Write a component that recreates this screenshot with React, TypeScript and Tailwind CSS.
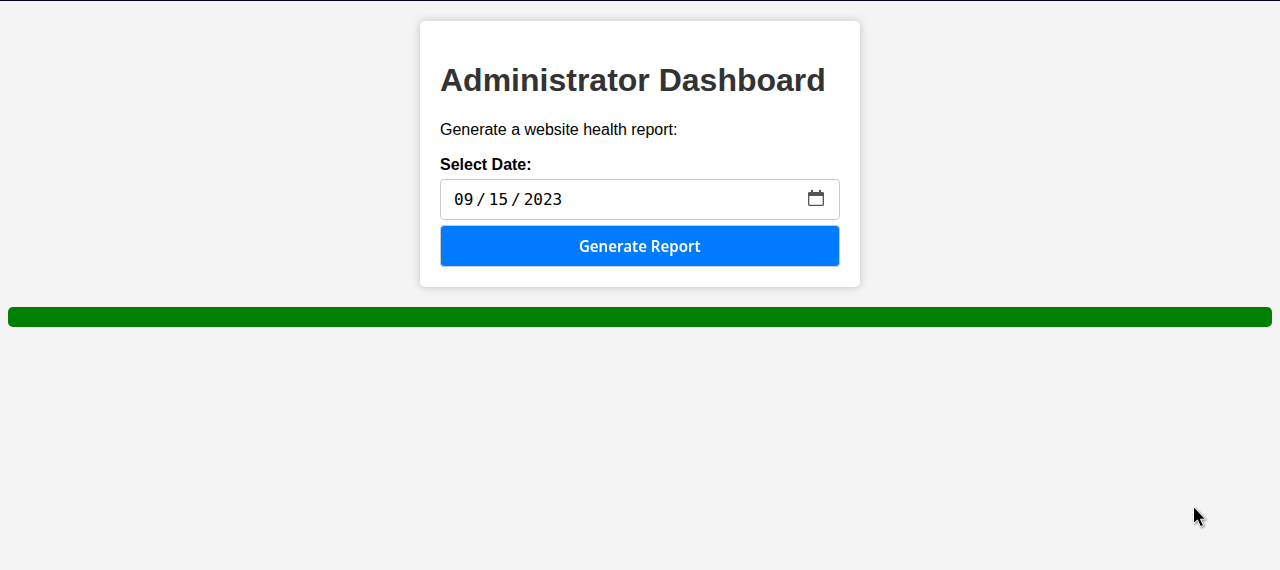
import React from 'react';

export default function App() {
  return (
    <div className="relative min-h-[570px] border-t border-[#0c0413] bg-[#f4f4f4] px-2 pt-5 font-['Liberation_Sans',Arial,sans-serif] text-base leading-[18px] text-black">
      <main className="mx-auto h-[266px] w-[440px] rounded-[5px] bg-white px-5 pt-[41px] shadow-[0_0_10px_rgba(0,0,0,0.2)]">
        <h1 className="text-[32px] font-bold leading-[37px] text-[#333]">Administrator Dashboard</h1>
        <p className="mt-[22px]">Generate a website health report:</p>
        <div className="mt-[17px] font-bold">Select Date:</div>
        <div className="mt-[5px] flex h-[41px] items-center justify-between rounded-[4px] border border-[#ccc] pl-[13px] pr-[15px]">
          <div className="flex font-['DejaVu_Sans_Mono',monospace] text-[16px]">
            <span>09</span><span className="w-[15.6px] text-center">/</span><span>15</span><span className="w-[15.6px] text-center">/</span><span>2023</span>
          </div>
          <svg className="mb-[3px]" width="16" height="16" viewBox="0 0 16 16" fill="none" stroke="#555">
            <rect x=".65" y="2.65" width="14.7" height="12.7" rx="1.2" strokeWidth="1.3" />
            <path d="M1.5 2h13a1.5 1.5 0 0 1 1.5 1.5V6H0V3.5A1.5 1.5 0 0 1 1.5 2z" fill="#555" stroke="none" />
            <path d="M4 0v3M12 0v3" strokeWidth="2" />
          </svg>
        </div>
        <button className="mt-[5px] block h-[42px] w-full rounded-[4px] border border-[#ccc] bg-[#007bff] font-['Noto_Sans',sans-serif] text-base font-semibold text-white">
          <span className="inline-block scale-x-[0.94]">Generate Report</span>
        </button>
      </main>
      <div className="mt-5 h-5 rounded-[5px] bg-[green]" />
      <svg className="absolute left-[1192px] top-[504px] drop-shadow-[1px_1px_1px_rgba(0,0,0,0.45)]" width="16" height="25" viewBox="0 0 16 25">
        <path d="M1.5 1.5v17l4-3.5 3 6.7 3-1.3-3-6.2h5z" fill="#000" stroke="#fff" />
      </svg>
    </div>
  );
}
